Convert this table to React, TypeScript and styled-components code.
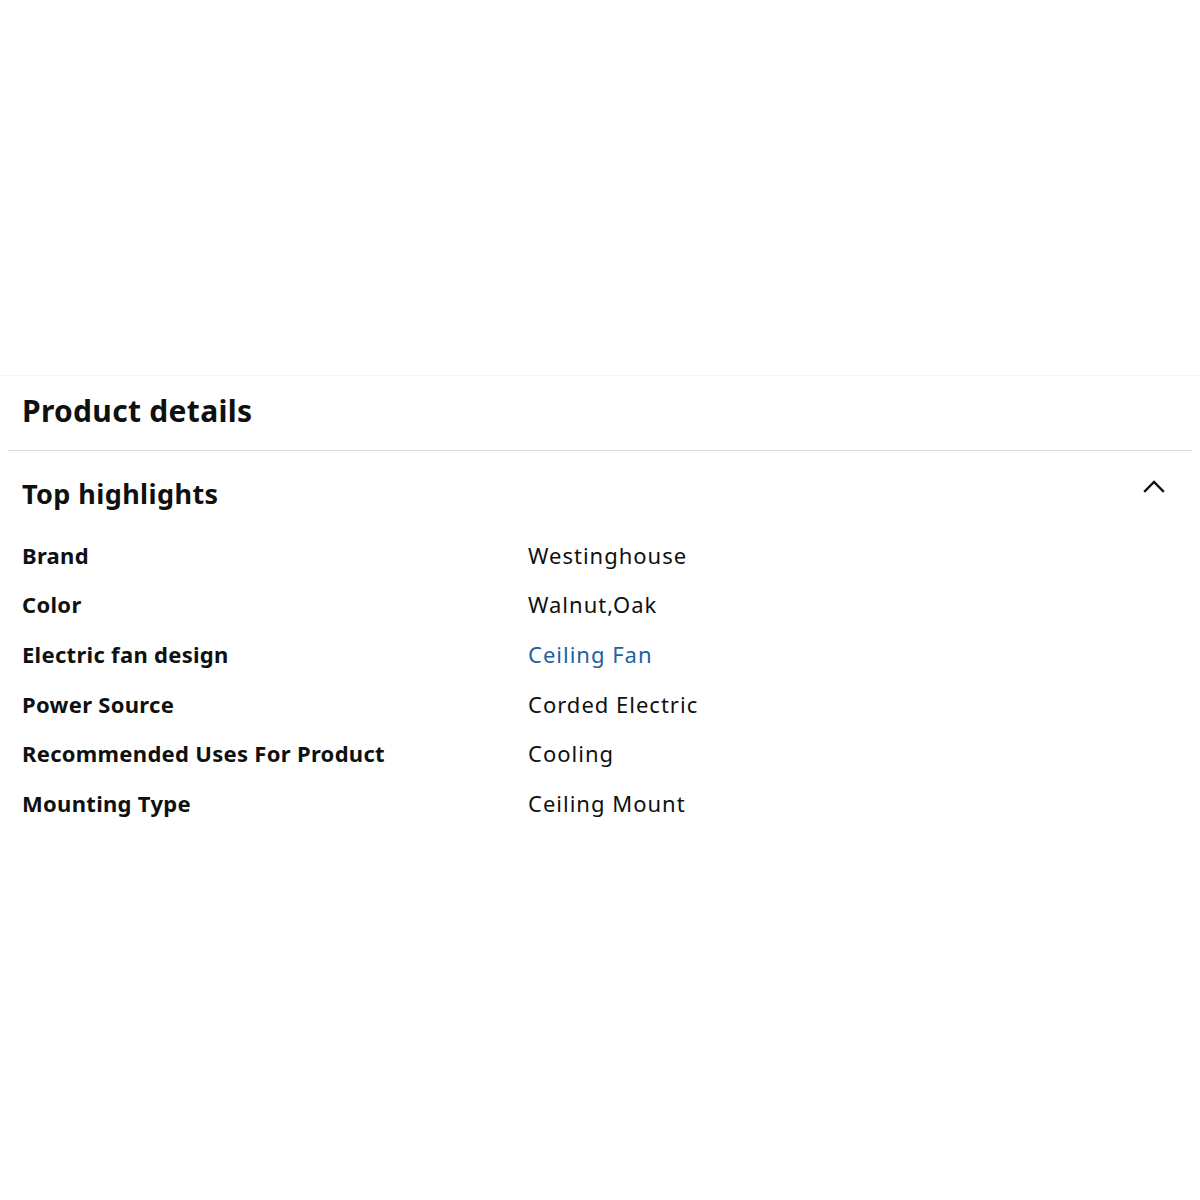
import React from "react";
import styled, { createGlobalStyle } from "styled-components";

const GlobalStyle = createGlobalStyle`
  html, body {
    margin: 0;
    padding: 0;
    background: #fff;
  }
  body {
    font-family: "Noto Sans", "Open Sans", Arial, sans-serif;
    color: #0f1111;
  }
`;

const rows = [
  { label: "Brand", value: "Westinghouse" },
  { label: "Color", value: "Walnut,Oak" },
  { label: "Electric fan design", value: "Ceiling Fan", link: true },
  { label: "Power Source", value: "Corded Electric" },
  { label: "Recommended Uses For Product", value: "Cooling" },
  { label: "Mounting Type", value: "Ceiling Mount" },
];

const ChevronUp = () => (
  <svg width="24" height="24" viewBox="0 0 24 24" fill="none">
    <path
      d="M3 16L12 7L21 16"
      stroke="#0f1111"
      strokeWidth="2.3"
      strokeLinecap="square"
    />
  </svg>
);

const App: React.FC = () => {
  return (
    <>
      <GlobalStyle />
      <Page>
        <Section>
          <Title>Product details</Title>
          <Divider />
          <Header>
            <SubTitle>Top highlights</SubTitle>
            <ToggleButton aria-label="Collapse">
              <ChevronUp />
            </ToggleButton>
          </Header>
          <Table>
            {rows.map((row) => (
              <Row key={row.label}>
                <Label>{row.label}</Label>
                <Value $link={row.link}>{row.value}</Value>
              </Row>
            ))}
          </Table>
        </Section>
      </Page>
    </>
  );
};

export default App;

const Page = styled.div`
  width: 1200px;
  height: 1200px;
  padding-top: 375px;
  box-sizing: border-box;
  background: #fff;
`;

const Section = styled.section`
  border-top: 1px solid #f4f4f4;
  padding: 0 8px;
`;

const Title = styled.h2`
  margin: 0;
  padding: 15px 14px 0;
  height: 74px;
  box-sizing: border-box;
  font-size: 30px;
  font-weight: 700;
  line-height: 40px;
  letter-spacing: 0.3px;
  color: #0f1111;
`;

const Divider = styled.hr`
  margin: 0;
  border: none;
  border-top: 1px solid #d5d9d9;
`;

const Header = styled.div`
  display: flex;
  align-items: center;
  justify-content: space-between;
  padding: 24px 14px 0;
`;

const SubTitle = styled.h3`
  margin: 0;
  font-size: 27px;
  font-weight: 700;
  line-height: 38px;
  letter-spacing: 0.4px;
`;

const ToggleButton = styled.button`
  background: none;
  border: none;
  padding: 0;
  margin-right: 12px;
  margin-top: -14px;
  display: flex;
  cursor: pointer;
`;

const Table = styled.div`
  display: flex;
  flex-direction: column;
  padding: 17px 14px 0;
`;

const Row = styled.div`
  display: grid;
  grid-template-columns: 506px 1fr;
  height: 49.6px;
  align-items: center;
`;

const Label = styled.span`
  font-size: 22px;
  font-weight: 700;
  line-height: 30px;
  letter-spacing: 0.3px;
`;

const Value = styled.span<{ $link?: boolean }>`
  font-size: 22px;
  line-height: 30px;
  letter-spacing: 1px;
  color: ${({ $link }) => ($link ? "#2162a1" : "#0f1111")};
`;
